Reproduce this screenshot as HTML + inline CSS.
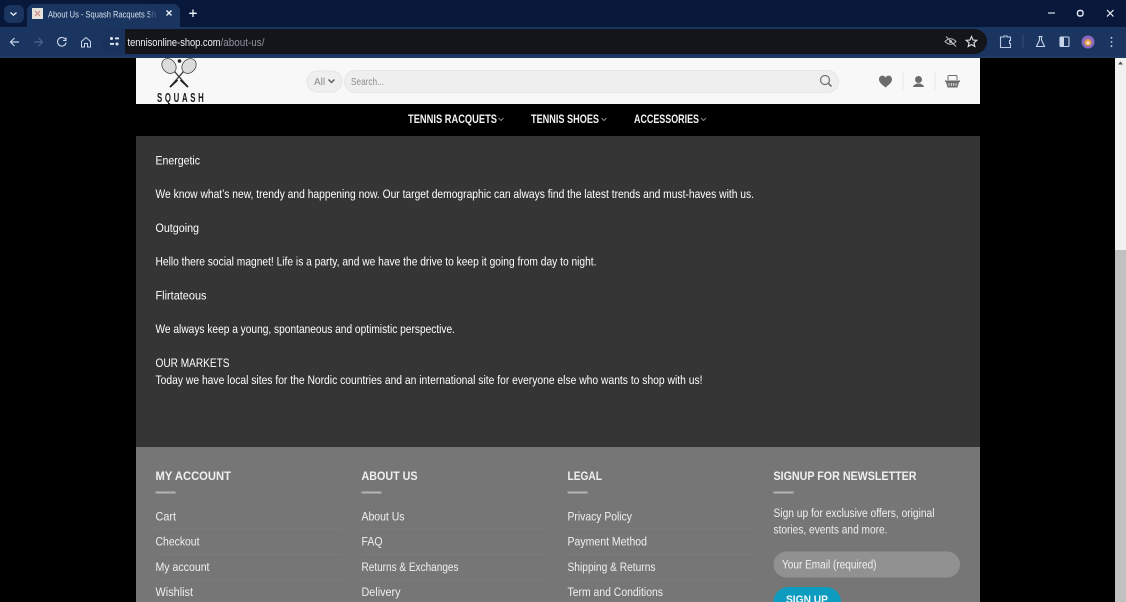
<!DOCTYPE html>
<html lang="en"><head><meta charset="utf-8"><title>About Us - Squash Racquets</title>
<style>
html,body{margin:0;padding:0;width:1126px;height:602px;overflow:hidden;background:#000}
svg{display:block}
text{font-family:"Liberation Sans",sans-serif}
.b{fill:#fff;font-size:12.1px}
.f{fill:#f0f0f0;font-size:12.1px}
.h{fill:#f0f0f0;font-size:12.3px;font-weight:bold}
.n{fill:#f2f2f2;font-size:11.6px;font-weight:bold}
.i{fill:none;stroke:#dfe6f2;stroke-width:1.1}
</style></head><body>
<svg width="1126" height="602" viewBox="0 0 1126 602" xmlns="http://www.w3.org/2000/svg">
<!-- browser chrome -->
<rect width="1126" height="27" fill="#07183a"/>
<rect y="27" width="1126" height="30" fill="#1a3560"/>
<rect y="56" width="1126" height="2" fill="#1f3a63"/>
<rect x="4" y="5" width="20" height="18" rx="6" fill="#1a3560"/>
<path d="M10.5 12.5l3 2.6 3-2.6" fill="none" stroke="#e8eef8" stroke-width="1.4"/>
<path d="M27 27V11a7 7 0 0 1 7-7h139a7 7 0 0 1 7 7v16z" fill="#1a3560"/>
<rect x="32" y="8" width="11" height="11" fill="#e6e2de"/>
<path d="M35 11l5 5M40 11l-5 5" stroke="#c98078" stroke-width="1"/>
<text x="48" y="17.500" font-size="9.600" fill="#d8e0ee" textLength="108" lengthAdjust="spacingAndGlyphs">About Us - Squash Racquets Sh</text>
<rect x="150" y="6" width="12" height="16" fill="#1a3560" opacity=".7"/>
<path d="M166.500 10.500l5 5M171.500 10.500l-5 5" stroke="#f0f4fa" stroke-width="1.300"/>
<path d="M193 9.500v7.500M189.200 13.300h7.600" stroke="#f0f4fa" stroke-width="1.300"/>
<path d="M1048 13h7" stroke="#d8dfec" stroke-width="1.200"/>
<rect x="1077.500" y="10.500" width="5.500" height="5.500" rx="2" fill="none" stroke="#e8eef8" stroke-width="1.400"/>
<path d="M1107 10l6.500 6.500M1113.500 10l-6.500 6.500" stroke="#f0f4fa" stroke-width="1.200"/>
<!-- toolbar icons -->
<path d="M19 42h-8M14.500 38l-4 4 4 4" fill="none" stroke="#c8d4e8" stroke-width="1.200"/>
<path d="M34 42h8M38.500 38l4 4-4 4" fill="none" stroke="#4c6488" stroke-width="1.200"/>
<path d="M65.500 39.500a4.300 4.300 0 1 0 .6 3M66 37.500v3h-3" fill="none" stroke="#ccd7e9" stroke-width="1.100"/>
<path d="M81.500 41.500l4.500-4 4.500 4v5.500h-3v-3.500h-3v3.500h-3z" fill="none" stroke="#ccd7e9" stroke-width="1"/>
<rect x="103" y="29" width="884" height="25" rx="12.500" fill="#13151a"/>
<path d="M103 41.500a12.500 12.500 0 0 1 12.500-12.500h9.500v25h-9.500a12.500 12.500 0 0 1-12.500-12.500z" fill="#1b335c"/>
<circle cx="111.500" cy="38.500" r="1.500" fill="#e3ebf7"/><rect x="115" y="37.500" width="4" height="1.800" fill="#e3ebf7"/>
<rect x="110" y="43" width="4" height="1.800" fill="#e3ebf7"/><circle cx="117" cy="44" r="1.500" fill="#e3ebf7"/>
<text x="127.500" y="46" font-size="10.800" fill="#f0f2f6" textLength="93" lengthAdjust="spacingAndGlyphs">tennisonline-shop.com</text>
<text x="220.500" y="46" font-size="10.800" fill="#8f949e" textLength="44" lengthAdjust="spacingAndGlyphs">/about-us/</text>
<path d="M945 41.500q5.500-5.500 11 0q-5.500 5.500-11 0zM946 36.500l10 10" fill="none" stroke="#b8bcc4" stroke-width="1"/>
<circle cx="950.500" cy="41.500" r="1.500" fill="#b8bcc4"/>
<path d="M971.500 36.500l1.500 3.500 3.800.3-2.900 2.500.9 3.700-3.300-2-3.300 2 .9-3.700-2.900-2.500 3.800-.3z" fill="none" stroke="#dfe3ea" stroke-width="1.100"/>
<path d="M1000.500 37h3.500v-1h3v1h3.500v3.500h-1v3h1v4h-10z" fill="none" stroke="#b8cae6" stroke-width="1.100"/>
<path d="M1023 35v13" stroke="#34507a" stroke-width="1"/>
<path d="M1038.500 36.500h4M1039.500 36.500v3.500l-3 6.500h8l-3-6.500v-3.500" fill="none" stroke="#c8d4e8" stroke-width="1.100"/>
<rect x="1060" y="37" width="9" height="9.500" rx="1" fill="none" stroke="#c8d4e8" stroke-width="1.100"/>
<rect x="1060" y="37" width="4" height="9.500" fill="#c8d4e8"/>
<circle cx="1088" cy="42" r="6.500" fill="#8a6ac0"/>
<circle cx="1088" cy="42.500" r="3.500" fill="#e89a3c"/>
<circle cx="1088" cy="43" r="1.700" fill="#fbe2b8"/>
<circle cx="1111.500" cy="37.800" r=".9" fill="#c8d4e8"/><circle cx="1111.500" cy="42" r=".9" fill="#c8d4e8"/><circle cx="1111.500" cy="46.200" r=".9" fill="#c8d4e8"/>

<!-- page bg -->
<rect y="58" width="1115" height="544" fill="#000"/>
<!-- scrollbar -->
<rect x="1115" y="58" width="11" height="544" fill="#f1f1f1"/>
<rect x="1115" y="250" width="11" height="352" fill="#c1c1c1"/>
<path d="M1118 64.500h5l-2.500-3z" fill="#505050"/>
<!-- header -->
<rect x="136" y="58" width="844" height="46" fill="#f8f8f8"/>
<g fill="#dcdcdc" stroke="#444" stroke-width=".8">
<ellipse cx="169" cy="66" rx="6.500" ry="8" transform="rotate(-40 169 66)"/>
<ellipse cx="189" cy="66" rx="6.500" ry="8" transform="rotate(40 189 66)"/>
</g>
<path d="M174.500 71.500l13.500 15.500M183.500 71.500l-13.500 15.500" stroke="#333" stroke-width="1.300"/>
<path d="M180.500 80l7.500 7M177.500 80l-7.500 7" stroke="#222" stroke-width="1.800"/>
<circle cx="179.500" cy="61" r="1.800" fill="#222"/>
<text transform="translate(157 102) scale(.6 1)" x="0" y="0" font-size="13" fill="#1a1a1a" font-weight="bold" textLength="78" lengthAdjust="spacing">SQUASH</text>
<rect x="307" y="71" width="35" height="21" rx="10.500" fill="#efefef" stroke="#e4e4e4"/>
<text x="314" y="85" font-size="10" fill="#8a8a8a">All</text>
<path d="M328.500 79.500l3 3 3-3" fill="none" stroke="#555" stroke-width="1.300"/>
<rect x="344.500" y="70.500" width="494" height="22" rx="11" fill="#efefef" stroke="#e6e6e6"/>
<text x="351" y="85" font-size="10" fill="#8c8c8c" textLength="33" lengthAdjust="spacingAndGlyphs">Search...</text>
<circle cx="825" cy="80" r="4.500" fill="none" stroke="#777" stroke-width="1.300"/>
<path d="M828.500 83.500l3 3" stroke="#777" stroke-width="1.700"/>
<path d="M885.500 87.500c-3-2.500-6.500-5-6.500-8 0-4.500 5-5 6.500-2 1.500-3 6.500-2.500 6.500 2 0 3-3.500 5.500-6.500 8z" fill="#6c6c6c"/>
<path d="M903 72v18M935 72v18" stroke="#e8e8e8"/>
<circle cx="918.500" cy="79.500" r="3.500" fill="#6c6c6c"/>
<path d="M913 87c0-2 3-3 4-3.500h3c1 .5 4 1.500 4 3.500z" fill="#6c6c6c"/>
<path d="M945 80.500h15v1.500h-1l-1.500 5.500h-10l-1.500-5.500h-1z" fill="#6c6c6c"/>
<path d="M948 80v-3.500a1 1 0 0 1 1-1h7a1 1 0 0 1 1 1v3.500" fill="none" stroke="#6c6c6c" stroke-width="1"/>
<path d="M949 83v3M951.300 83v3M953.700 83v3M956 83v3" stroke="#f8f8f8" stroke-width=".8"/>
<!-- nav -->
<text class="n" x="408" y="123" textLength="89" lengthAdjust="spacingAndGlyphs">TENNIS RACQUETS</text>
<path d="M498.500 118l2.500 2.500 2.500-2.500" fill="none" stroke="#888"/>
<text class="n" x="531" y="123" textLength="68" lengthAdjust="spacingAndGlyphs">TENNIS SHOES</text>
<path d="M601.500 118l2.500 2.500 2.500-2.500" fill="none" stroke="#888"/>
<text class="n" x="634" y="123" textLength="65" lengthAdjust="spacingAndGlyphs">ACCESSORIES</text>
<path d="M701 118l2.500 2.500 2.500-2.500" fill="none" stroke="#888"/>
<!-- content -->
<rect x="136" y="136" width="844" height="311" fill="#353535"/>
<text class="b" x="155.500" y="164.500" textLength="44.500" lengthAdjust="spacingAndGlyphs">Energetic</text>
<text class="b" x="155.500" y="198" textLength="598.500" lengthAdjust="spacingAndGlyphs">We know what’s new, trendy and happening now. Our target demographic can always find the latest trends and must-haves with us.</text>
<text class="b" x="155.500" y="232" textLength="43.500" lengthAdjust="spacingAndGlyphs">Outgoing</text>
<text class="b" x="155.500" y="265.500" textLength="441" lengthAdjust="spacingAndGlyphs">Hello there social magnet! Life is a party, and we have the drive to keep it going from day to night.</text>
<text class="b" x="155.500" y="299.500" textLength="51" lengthAdjust="spacingAndGlyphs">Flirtateous</text>
<text class="b" x="155.500" y="333" textLength="299.500" lengthAdjust="spacingAndGlyphs">We always keep a young, spontaneous and optimistic perspective.</text>
<text class="b" x="155.500" y="367" textLength="74" lengthAdjust="spacingAndGlyphs">OUR MARKETS</text>
<text class="b" x="155.500" y="384" textLength="547" lengthAdjust="spacingAndGlyphs">Today we have local sites for the Nordic countries and an international site for everyone else who wants to shop with us!</text>
<!-- footer -->
<rect x="136" y="447" width="844" height="155" fill="#767676"/>
<text class="h" x="155.500" y="480" textLength="75.500" lengthAdjust="spacingAndGlyphs">MY ACCOUNT</text>
<text class="h" x="361.500" y="480" textLength="56" lengthAdjust="spacingAndGlyphs">ABOUT US</text>
<text class="h" x="567.500" y="480" textLength="34.500" lengthAdjust="spacingAndGlyphs">LEGAL</text>
<text class="h" x="773.500" y="480" textLength="143" lengthAdjust="spacingAndGlyphs">SIGNUP FOR NEWSLETTER</text>
<g fill="#b4b4b4">
<rect x="155.500" y="491.500" width="20" height="2"/><rect x="361.500" y="491.500" width="20" height="2"/><rect x="567.500" y="491.500" width="20" height="2"/><rect x="773.500" y="491.500" width="20" height="2"/>
</g>
<g stroke="#7c7c7c">
<path d="M155.500 529h186M155.500 554.500h186M155.500 580h186M361.500 529h186M361.500 554.500h186M361.500 580h186M567.500 529h186M567.500 554.500h186M567.500 580h186"/>
</g>
<text class="f" x="155.500" y="520.500" textLength="20.500" lengthAdjust="spacingAndGlyphs">Cart</text>
<text class="f" x="155.500" y="545.500" textLength="44" lengthAdjust="spacingAndGlyphs">Checkout</text>
<text class="f" x="155.500" y="571" textLength="54" lengthAdjust="spacingAndGlyphs">My account</text>
<text class="f" x="155.500" y="596" textLength="37.500" lengthAdjust="spacingAndGlyphs">Wishlist</text>
<text class="f" x="361.500" y="520.500" textLength="43" lengthAdjust="spacingAndGlyphs">About Us</text>
<text class="f" x="361.500" y="545.500" textLength="21" lengthAdjust="spacingAndGlyphs">FAQ</text>
<text class="f" x="361.500" y="571" textLength="97" lengthAdjust="spacingAndGlyphs">Returns &amp; Exchanges</text>
<text class="f" x="361.500" y="596" textLength="39" lengthAdjust="spacingAndGlyphs">Delivery</text>
<text class="f" x="567.500" y="520.500" textLength="64.500" lengthAdjust="spacingAndGlyphs">Privacy Policy</text>
<text class="f" x="567.500" y="545.500" textLength="79.500" lengthAdjust="spacingAndGlyphs">Payment Method</text>
<text class="f" x="567.500" y="571" textLength="88" lengthAdjust="spacingAndGlyphs">Shipping &amp; Returns</text>
<text class="f" x="567.500" y="596" textLength="95.500" lengthAdjust="spacingAndGlyphs">Term and Conditions</text>
<text class="f" x="773.500" y="517" textLength="161" lengthAdjust="spacingAndGlyphs">Sign up for exclusive offers, original</text>
<text class="f" x="773.500" y="533.500" textLength="114" lengthAdjust="spacingAndGlyphs">stories, events and more.</text>
<rect x="773.500" y="551.500" width="186.500" height="26" rx="13" fill="#919191"/>
<text class="f" x="782" y="568.500" textLength="94.500" lengthAdjust="spacingAndGlyphs">Your Email (required)</text>
<rect x="773.500" y="587" width="67.500" height="30" rx="15" fill="#0d9cc0"/>
<text x="786" y="603" font-size="11" font-weight="bold" fill="#f4f8fa" textLength="42" lengthAdjust="spacingAndGlyphs">SIGN UP</text>
</svg>
</body></html>
